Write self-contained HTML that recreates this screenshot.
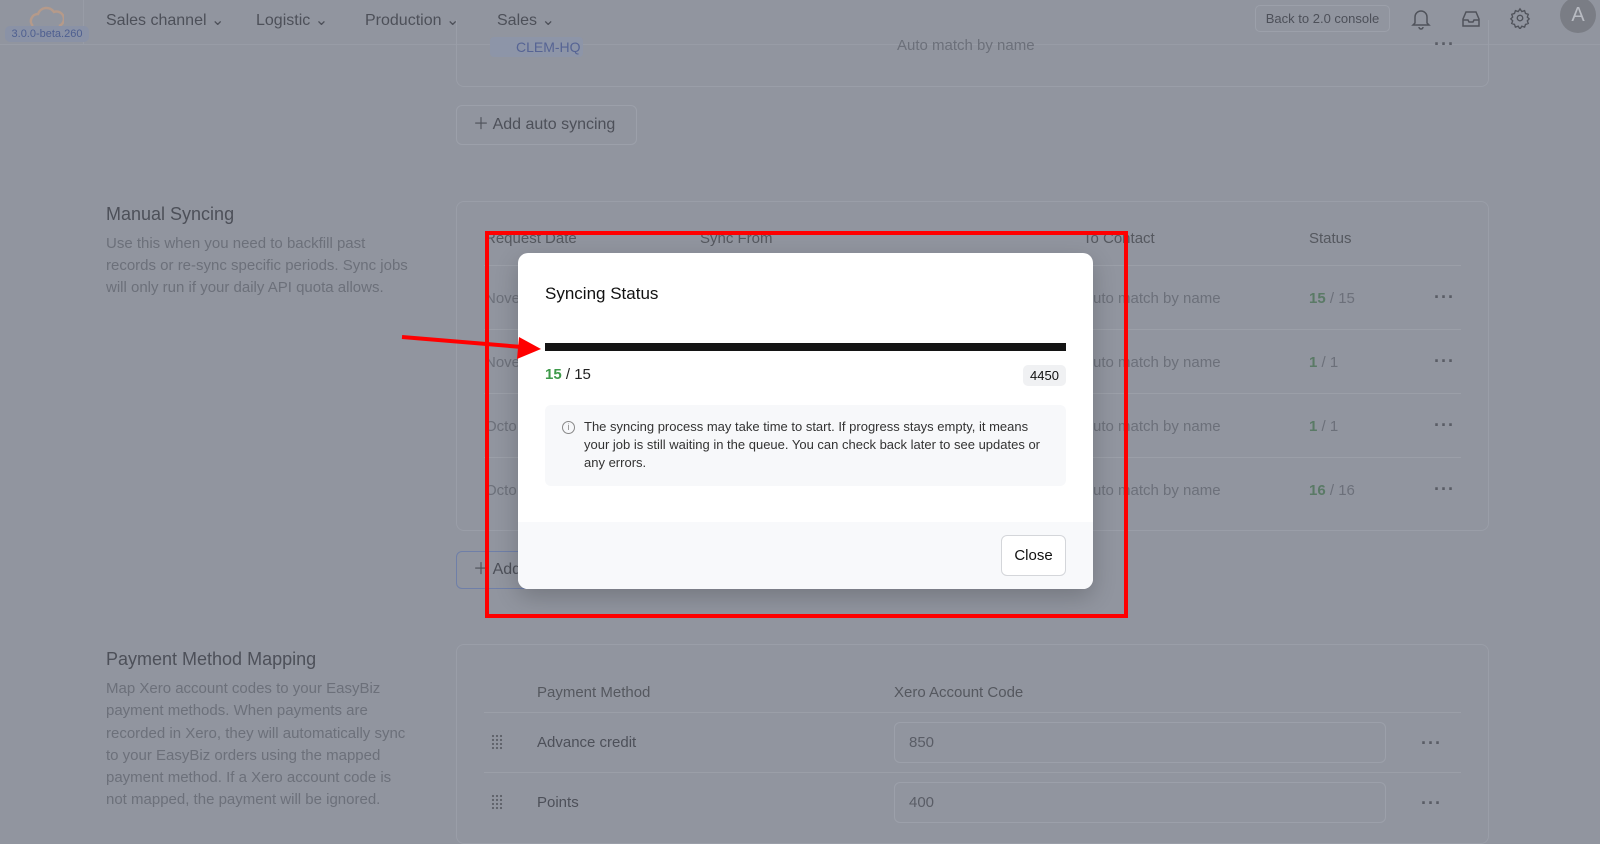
<!DOCTYPE html>
<html><head><meta charset="utf-8"><style>
*{box-sizing:border-box;margin:0;padding:0}
body{width:1600px;height:810px;overflow:hidden;background:#91959f;font-family:"Liberation Sans",sans-serif;position:relative;color:#4d5059}
.a{position:absolute;white-space:nowrap}
.card{position:absolute;border:1px solid #9a9ea8;border-radius:8px}
.g{color:#6c707a}
.hd{color:#55585f;font-size:15px}
.dots{position:absolute;font-size:18px;letter-spacing:1px;color:#5a5d66;font-weight:bold}
.line{position:absolute;height:1px;background:#9b9fa8}
</style></head><body>
<!-- nav -->
<div class="a" style="left:0;top:0;width:1600px;height:45px;border-bottom:1px solid #989ca6"></div>
<div class="a" style="left:83px;top:0;width:1px;height:45px;background:#989ca6"></div>
<svg class="a" style="left:28px;top:4px" width="36" height="24" viewBox="0 0 36 24"><path d="M5 22 A7 7 0 0 1 10 10 A9 9 0 0 1 26 8 A7 7 0 0 1 31 22" fill="none" stroke="#b59a8a" stroke-width="2.5"/></svg>
<div class="a" style="left:5px;top:26px;width:84px;height:16px;border-radius:5px;background:#8a92a6;color:#4e5f90;font-size:11px;line-height:16px;text-align:center">3.0.0-beta.260</div>
<div class="a" style="left:106px;top:10px;font-size:16px;color:#4d5059">Sales channel ⌄</div>
<div class="a" style="left:256px;top:10px;font-size:16px">Logistic ⌄</div>
<div class="a" style="left:365px;top:10px;font-size:16px">Production ⌄</div>
<div class="a" style="left:497px;top:10px;font-size:16px">Sales ⌄</div>
<div class="a" style="left:1255px;top:5px;width:135px;height:27px;border:1px solid #9ca0aa;border-radius:5px;font-size:13px;line-height:25px;text-align:center">Back to 2.0 console</div>
<svg class="a" style="left:1411px;top:8px" width="20" height="22" viewBox="0 0 20 22" fill="none" stroke="#50535b" stroke-width="1.5"><path d="M4 15V9a6 6 0 0 1 12 0v6l2 2H2z M8 19a2 2 0 0 0 4 0"/></svg>
<svg class="a" style="left:1460px;top:8px" width="22" height="22" viewBox="0 0 22 22" fill="none" stroke="#50535b" stroke-width="1.5"><path d="M3 11l3-7h10l3 7v7H3z M3 12h5l1 2h4l1-2h5"/></svg>
<svg class="a" style="left:1509px;top:7px" width="22" height="22" viewBox="0 0 24 24" fill="none" stroke="#50535b" stroke-width="1.5"><circle cx="12" cy="12" r="3"/><path d="M12 2l2 3 3-1 1 3 3 1-1 3 2 2-2 2 1 3-3 1-1 3-3-1-2 3-2-3-3 1-1-3-3-1 1-3-2-2 2-2-1-3 3-1 1-3 3 1z"/></svg>
<div class="a" style="left:1560px;top:-3px;width:36px;height:36px;border-radius:50%;background:#7a7d85;color:#b8bbc2;font-size:20px;line-height:36px;text-align:center">A</div>
<!-- top card -->
<div class="card" style="left:456px;top:20px;width:1033px;height:67px;border-top:none;border-radius:0 0 8px 8px"></div>
<div class="a" style="left:490px;top:37px;width:93px;height:20px;border-radius:4px;background:#8d95a8;color:#566494;font-size:14px;line-height:20px;padding-left:26px">CLEM-HQ</div>
<div class="a g" style="left:897px;top:37px;font-size:15px">Auto match by name</div>
<div class="dots" style="left:1434px;top:34px">···</div>
<div class="a" style="left:456px;top:105px;width:181px;height:40px;border:1px solid #9ca0aa;border-radius:6px;font-size:16px;line-height:38px;padding-left:16px">＋ Add auto syncing</div>
<!-- manual -->
<div class="a" style="left:106px;top:204px;font-size:18px;color:#4d5059">Manual Syncing</div>
<div class="a g" style="left:106px;top:233px;font-size:15px;line-height:22px">Use this when you need to backfill past<br>records or re-sync specific periods. Sync jobs<br>will only run if your daily API quota allows.</div>
<div class="card" style="left:456px;top:201px;width:1033px;height:330px"></div>
<div class="a hd" style="left:485px;top:230px">Request Date</div>
<div class="a hd" style="left:700px;top:230px">Sync From</div>
<div class="a hd" style="left:1083px;top:230px">To Contact</div>
<div class="a hd" style="left:1309px;top:230px">Status</div>
<div class="line" style="left:484px;top:265px;width:977px"></div>
<div class="line" style="left:484px;top:329px;width:977px"></div>
<div class="line" style="left:484px;top:393px;width:977px"></div>
<div class="line" style="left:484px;top:457px;width:977px"></div>
<div class="a g" style="left:485px;top:290px;font-size:15px">Nove</div>
<div class="a g" style="left:485px;top:354px;font-size:15px">Nove</div>
<div class="a g" style="left:485px;top:418px;font-size:15px">Octo</div>
<div class="a g" style="left:485px;top:482px;font-size:15px">Octo</div>
<div class="a g" style="left:1083px;top:290px;font-size:15px">Auto match by name</div>
<div class="a g" style="left:1083px;top:354px;font-size:15px">Auto match by name</div>
<div class="a g" style="left:1083px;top:418px;font-size:15px">Auto match by name</div>
<div class="a g" style="left:1083px;top:482px;font-size:15px">Auto match by name</div>
<div class="a g" style="left:1309px;top:290px;font-size:15px"><b style="color:#5a7a66">15</b> / 15</div>
<div class="a g" style="left:1309px;top:354px;font-size:15px"><b style="color:#5a7a66">1</b> / 1</div>
<div class="a g" style="left:1309px;top:418px;font-size:15px"><b style="color:#5a7a66">1</b> / 1</div>
<div class="a g" style="left:1309px;top:482px;font-size:15px"><b style="color:#5a7a66">16</b> / 16</div>
<div class="dots" style="left:1434px;top:287px">···</div>
<div class="dots" style="left:1434px;top:351px">···</div>
<div class="dots" style="left:1434px;top:415px">···</div>
<div class="dots" style="left:1434px;top:479px">···</div>
<div class="a" style="left:456px;top:551px;width:180px;height:38px;border:1px solid #6f7fa8;border-radius:6px;font-size:16px;line-height:36px;padding-left:16px">＋ Add</div>
<!-- payment -->
<div class="a" style="left:106px;top:649px;font-size:18px">Payment Method Mapping</div>
<div class="a g" style="left:106px;top:678px;font-size:15px;line-height:22.3px">Map Xero account codes to your EasyBiz<br>payment methods. When payments are<br>recorded in Xero, they will automatically sync<br>to your EasyBiz orders using the mapped<br>payment method. If a Xero account code is<br>not mapped, the payment will be ignored.</div>
<div class="card" style="left:456px;top:644px;width:1033px;height:200px"></div>
<div class="a hd" style="left:537px;top:684px">Payment Method</div>
<div class="a hd" style="left:894px;top:684px">Xero Account Code</div>
<div class="line" style="left:484px;top:712px;width:977px"></div>
<div class="line" style="left:484px;top:772px;width:977px"></div>
<div class="a" style="left:491px;top:734px;width:12px;height:16px;background:radial-gradient(circle,#5e6169 1px,transparent 1.3px) 0 0/4px 4px"></div>
<div class="a" style="left:491px;top:794px;width:12px;height:16px;background:radial-gradient(circle,#5e6169 1px,transparent 1.3px) 0 0/4px 4px"></div>
<div class="a hd" style="left:537px;top:734px;color:#4d5059">Advance credit</div>
<div class="a hd" style="left:537px;top:794px;color:#4d5059">Points</div>
<div class="a" style="left:894px;top:722px;width:492px;height:41px;border:1px solid #9ca0aa;border-radius:6px;font-size:15px;line-height:39px;padding-left:14px;color:#5a5d66">850</div>
<div class="a" style="left:894px;top:782px;width:492px;height:41px;border:1px solid #9ca0aa;border-radius:6px;font-size:15px;line-height:39px;padding-left:14px;color:#5a5d66">400</div>
<div class="dots" style="left:1421px;top:733px">···</div>
<div class="dots" style="left:1421px;top:793px">···</div>
<!-- modal -->
<div class="a" style="left:518px;top:253px;width:575px;height:336px;background:#fff;border-radius:10px;overflow:hidden;box-shadow:0 8px 24px rgba(0,0,0,.2)">
 <div class="a" style="left:27px;top:31px;font-size:17px;color:#111">Syncing Status</div>
 <div class="a" style="left:27px;top:90px;width:521px;height:8px;background:#141414"></div>
 <div class="a" style="left:27px;top:113px;font-size:15px;color:#222"><b style="color:#3e9a4a">15</b> / 15</div>
 <div class="a" style="left:505px;top:112px;width:43px;height:21px;background:#f0f1f3;border-radius:5px;font-size:13px;line-height:21px;text-align:center;color:#111">4450</div>
 <div class="a" style="left:27px;top:152px;width:521px;height:81px;background:#f7f8fa;border-radius:6px"></div>
 <div class="a" style="left:44px;top:168px;width:13px;height:13px;border:1px solid #888;border-radius:50%;font-size:9px;line-height:11px;text-align:center;color:#888">i</div>
 <div class="a" style="left:66px;top:165px;width:470px;white-space:normal;font-size:13px;line-height:18px;color:#333">The syncing process may take time to start. If progress stays empty, it means your job is still waiting in the queue. You can check back later to see updates or any errors.</div>
 <div class="a" style="left:0;top:269px;width:575px;height:67px;background:#f8f9fb"></div>
 <div class="a" style="left:483px;top:282px;width:65px;height:41px;background:#fff;border:1px solid #d4d6da;border-radius:6px;font-size:15px;line-height:39px;text-align:center;color:#111">Close</div>
</div>
<div class="a" style="left:485px;top:231px;width:643px;height:387px;border:4px solid #f00"></div>
<svg class="a" style="left:0;top:0" width="600" height="400"><line x1="402" y1="337" x2="522" y2="347" stroke="#f00" stroke-width="4"/><polygon points="541,349 519,337 517,359" fill="#f00"/></svg>
</body></html>
